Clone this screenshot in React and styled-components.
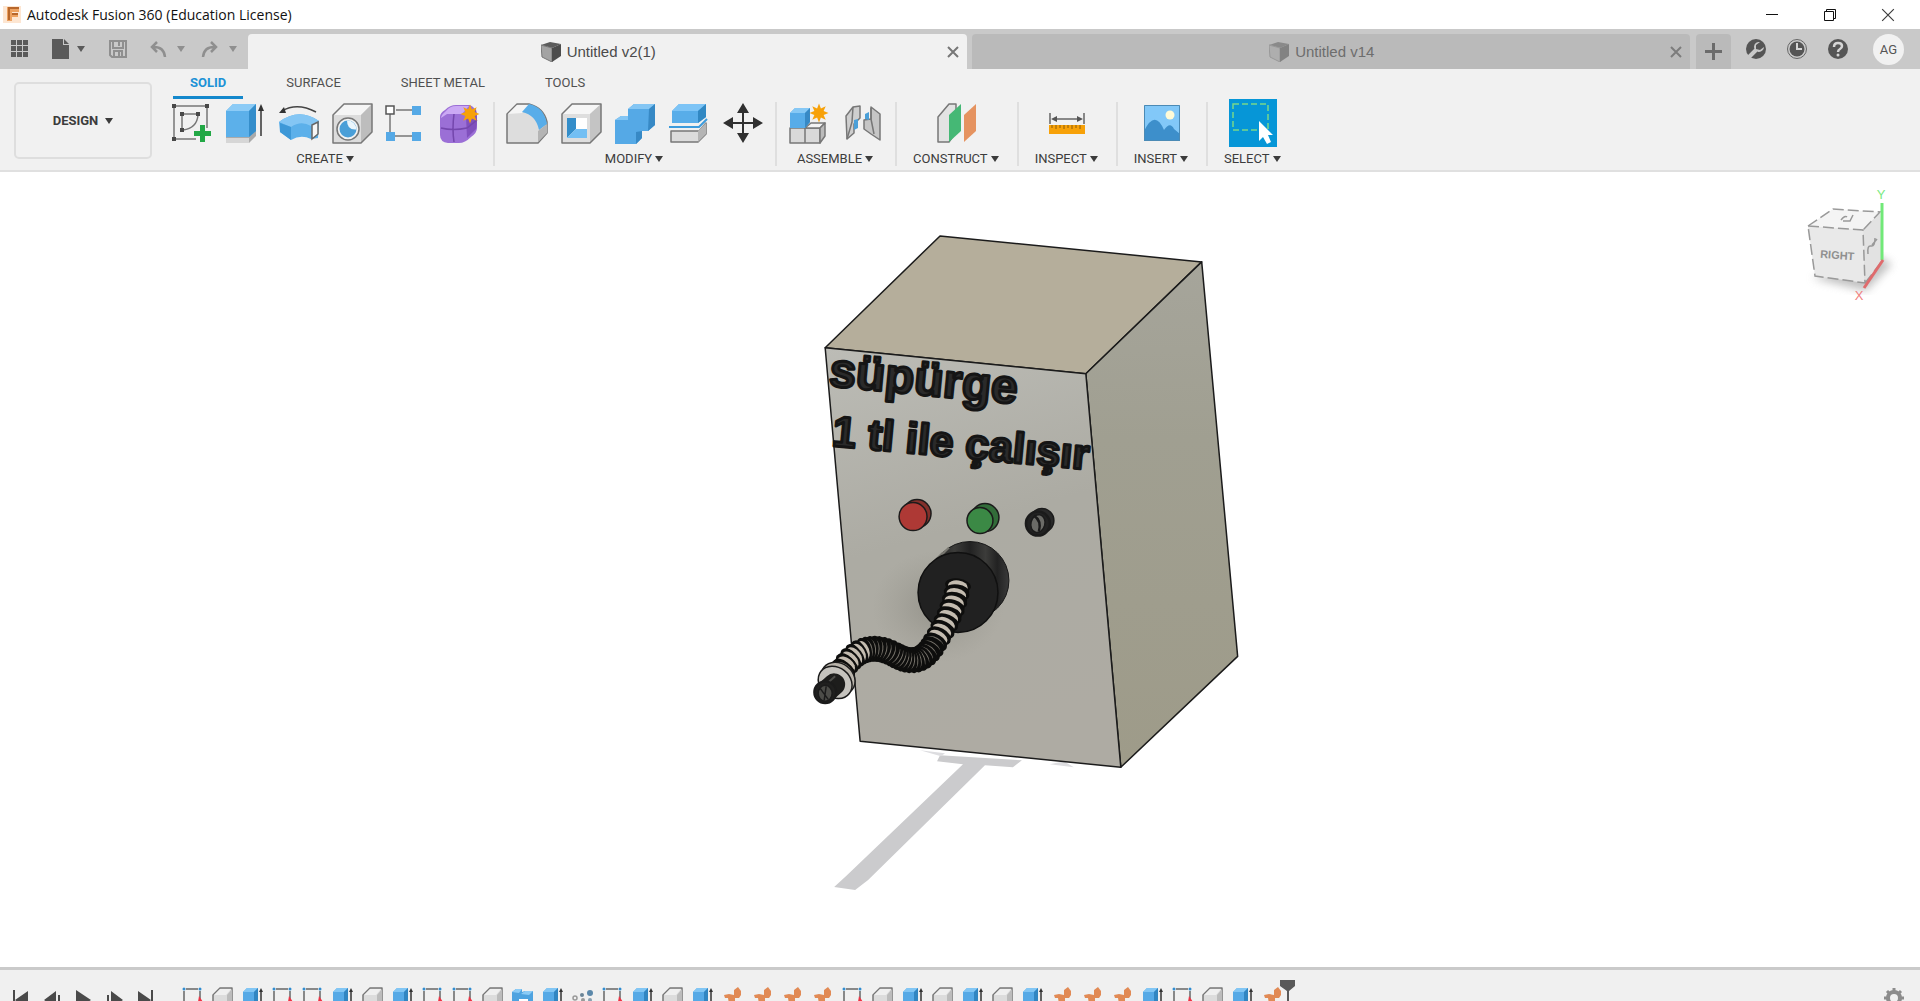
import React from "react";
import styled, { createGlobalStyle } from "styled-components";

const Global = createGlobalStyle`
  * { box-sizing: border-box; }
  html, body { margin: 0; background: #fff; }
  body { font-family: Roboto, "Liberation Sans", sans-serif; color: #3c3c3c; }
  button { font: inherit; color: inherit; background: none; border: 0; padding: 0; margin: 0; cursor: pointer; }
  svg { display: block; }
`;

const Shell = styled.div`
  display: flex;
  flex-direction: column;
  height: 100vh;
  overflow: hidden;
`;

/* ---------- window title ---------- */

const TitleBar = styled.header`
  display: flex;
  align-items: center;
  height: 29px;
  padding: 0 22px 0 3px;
  background: #fff;
`;

const Title = styled.h1`
  flex: 1;
  margin: 0 0 0 6px;
  font: 400 14px/20px "Open Sans", sans-serif;
  color: #111;
`;

const WindowButtons = styled.div`
  display: flex;
  gap: 38px;
`;

const WindowButton = styled.button`
  width: 20px;
  height: 20px;
  display: grid;
  place-items: center;
`;

/* ---------- document bar ---------- */

const DocumentBar = styled.div`
  display: flex;
  align-items: stretch;
  height: 40px;
  padding-top: 5px;
  background: #c9c9c9;
`;

const QuickAccess = styled.div`
  display: flex;
  align-items: center;
  width: 248px;
  padding: 0 8px 5px 10px;
  color: #555;
`;

const QuickButton = styled.button`
  display: flex;
  align-items: center;
  gap: ${(p) => (p.$muted ? 9 : 5)}px;
  margin-right: ${(p) => p.$after || 0}px;
  color: ${(p) => (p.$muted ? "#8f8f8f" : "#5a5a5a")};
`;

const Tabs = styled.div`
  display: flex;
  flex: 1;
  gap: 5px;
`;

const DocTab = styled.div`
  display: flex;
  align-items: center;
  flex: 1;
  padding-right: 8px;
  border-radius: 4px 4px 0 0;
  background: ${(p) => (p.$active ? "#f1f1f1" : "#bababa")};
  color: ${(p) => (p.$active ? "#4a4a4a" : "#6d6d6d")};
`;

const DocTitle = styled.button`
  display: flex;
  flex: 1;
  align-items: center;
  justify-content: center;
  gap: 5px;
  height: 35px;
  padding-left: 2px;
  font: 400 15px/20px "Liberation Sans", Arial, sans-serif;
`;

const CloseTab = styled.button`
  color: ${(p) => (p.$active ? "#777" : "#7c7c7c")};
`;

const AddTab = styled.button`
  display: grid;
  place-items: center;
  width: 35px;
  margin-left: 6px;
  border-radius: 4px 4px 0 0;
  background: #bababa;
  color: #6b6b6b;
`;

const Account = styled.div`
  display: flex;
  align-items: center;
  gap: 21px;
  padding: 0 16px 5px 15px;
  color: #555;
`;

const Avatar = styled.button`
  width: 31px;
  height: 31px;
  margin-left: 4px;
  border-radius: 50%;
  background: #f1f1f1;
  color: #555;
  font-size: 13px;
  line-height: 31px;
`;

/* ---------- ribbon ---------- */

const Ribbon = styled.div`
  display: flex;
  height: 103px;
  padding-left: 14px;
  background: #f1f1f1;
  border-bottom: 2px solid #e0e0e0;
`;

const Workspace = styled.button`
  display: flex;
  align-items: center;
  justify-content: center;
  gap: 7px;
  width: 138px;
  height: 77px;
  margin-top: 13px;
  border: 2px solid #dedede;
  border-radius: 5px;
  font-size: 13px;
  font-weight: 700;
`;

const RibbonBody = styled.div`
  margin-left: 5px;
`;

const RibbonTabs = styled.nav`
  display: flex;
  gap: 26px;
  padding-left: 16px;
`;

const RibbonTab = styled.button`
  height: 30px;
  padding: 0 17px;
  border-bottom: 3px solid ${(p) => (p.$active ? "#1488cc" : "transparent")};
  color: ${(p) => (p.$active ? "#1c92d6" : "#505050")};
  font-size: 13px;
  font-weight: ${(p) => (p.$active ? 700 : 400)};
`;

const Groups = styled.div`
  display: flex;
`;

const Group = styled.section`
  position: relative;
  padding: 0 8px 0 10px;
  & + &::before {
    content: "";
    position: absolute;
    left: 0;
    top: 3px;
    bottom: 4px;
    width: 2px;
    background: #dfdfdf;
  }
`;

const Tools = styled.div`
  display: flex;
  justify-content: center;
  gap: 6px;
`;

const Tool = styled.button`
  display: grid;
  place-items: center;
  width: 48px;
  height: 48px;
  background: ${(p) => (p.$active ? "#0696d7" : "none")};
`;

const GroupLabel = styled.button`
  display: flex;
  align-items: center;
  justify-content: center;
  gap: 3px;
  width: 100%;
  height: 23px;
  padding: 0 10px 0 8px;
  font-size: 13px;
`;

/* ---------- canvas ---------- */

const Viewport = styled.main`
  position: relative;
  flex: 1;
  min-height: 0;
  background: #fff;
`;

const Scene = styled.svg`
  width: 100%;
  height: 100%;
`;

const ViewCube = styled.svg`
  position: absolute;
  top: 8px;
  right: 10px;
`;

/* ---------- timeline ---------- */

const Timeline = styled.footer`
  display: flex;
  align-items: flex-start;
  height: 34px;
  padding: 16px 11px 0 6px;
  border-top: 3px solid #cacaca;
  background: #f0f0f0;
  overflow: hidden;
`;

const Playback = styled.div`
  display: flex;
  gap: 1px;
  width: 171px;
  color: #4a4a4a;
`;

const TimelineButton = styled.button`
  display: grid;
  justify-items: center;
  width: 30px;
  height: 26px;
`;

const Features = styled.div`
  display: flex;
  flex: 1;
`;

const Marker = styled.svg`
  margin: -6px 0 0 -8px;
  flex: none;
`;

/* ---------- small glyphs ---------- */

const Caret = () => (
  <svg width="8" height="6" viewBox="0 0 8 6" aria-hidden="true"><path d="M0 0h8L4 6z" fill="currentColor" /></svg>
);

const Cross = ({ size = 12, width = 2 }) => (
  <svg width={size} height={size} viewBox="0 0 12 12"><path d="M1 1l10 10M11 1L1 11" stroke="currentColor" strokeWidth={width} /></svg>
);

const Cube = ({ faded }) => (
  <svg width="21" height="20" viewBox="0 0 21 20" opacity={faded ? 0.5 : 1}>
    <path d="M0 3l9-3 11 2-9 4z" fill="#5c5c5c" />
    <path d="M0 3l11 3v14L1 15z" fill="#a3a3a3" stroke="#777" />
    <path d="M11 6l9-4v12l-9 6z" fill="#4c4c4c" />
  </svg>
);

const Logo = () => (
  <svg width="18" height="19" viewBox="0 0 18 19">
    <path d="M0 1h18v17H0z" fill="#fde6d2" />
    <path d="M4 2h12v5H9v1h6v4H9v4H4z" fill="#eda261" />
    <path d="M5 2h11v2H5zM5 2h2v13H5zM9 8h6v2H9z" fill="#b8672b" />
  </svg>
);

const edge = { stroke: "#777", strokeWidth: 1.500, strokeLinejoin: "round" };
const Star = ({ x, y }) => {
  const pts = [];
  for (let i = 0; i < 16; i++) {
    const r = i % 2 ? 5 : 9.500;
    const a = (i * Math.PI) / 8;
    pts.push(`${x + r * Math.sin(a)},${y - r * Math.cos(a)}`);
  }
  return <polygon points={pts.join(" ")} fill="#f7a108" />;
};

const ICONS = {
  sketch: (
    <>
      <path d="M5 5h33v22M5 5v33h22M13 13h16M13 13v16M29 14q-1 13-15 15" fill="none" stroke="#777" strokeWidth="1.500" />
      <path d="M3 3h4v4H3zM36 3h4v4h-4zM3 36h4v4H3zM11 11h4v4h-4zM27 11h4v4h-4zM11 27h4v4h-4z" fill="#484848" />
      <path d="M31 24h5v6h6v5h-6v6h-5v-6h-6v-5h6z" fill="#22a846" />
    </>
  ),
  extrude: (
    <>
      <path d="M3 36l7-7h23v6l-7 7H3z" fill="#aaa" /><path d="M3 37h23v5H3z" fill="#d6d6d6" />
      <path d="M3 10l7-7h23v27l-7 6H3z" fill="#5cb0ea" />
      <path d="M3 10l7-7h23l-7 7z" fill="#8ccbf6" /><path d="M26 10l7-7v27l-7 6z" fill="#358ecb" />
      <path d="M38 35V8" stroke="#333" strokeWidth="1.500" /><path d="M38 3l3 7h-6z" fill="#333" />
    </>
  ),
  revolve: (
    <>
      <path d="M5 10Q20 1 39 11" fill="none" stroke="#444" strokeWidth="1.500" /><path d="M2 12l5-6 2 6z" fill="#333" />
      <path d="M2 21Q22 6 42 20l-1 17-7 1q-10-5-20 1L3 31z" fill="#5cb0ea" />
      <path d="M2 21Q22 6 42 20l-8 5q-10-6-20 1z" fill="#84c6f4" /><path d="M3 22l11 4v13L3 31z" fill="#3d98d7" />
      <path d="M35 24l6-3v12l-6 5z" fill="#f6f6f6" stroke="#666" strokeWidth="1.500" />
    </>
  ),
  hole: (
    <>
      <path d="M2 14L13 3h28v28L30 42H2z" fill="#dcdcdc" /><path d="M2 14L13 3h28L30 14z" fill="#f5f5f5" />
      <path d="M30 14L41 3v28L30 42z" fill="#bdbdbd" /><path d="M2 14L13 3h28v28L30 42H2z" fill="none" {...edge} />
      <circle cx="17" cy="28" r="11" fill="#f3f3f3" {...edge} /><circle cx="17" cy="28" r="8.500" fill="#4a9fd8" />
      <path d="M16 19.500q0 10 9.500 9a9 9 0 0 0-9.500-9z" fill="#eaf5fc" />
    </>
  ),
  pattern: (
    <>
      <path d="M11 9h17M5 13v19M9 35h20" stroke="#777" strokeWidth="1.500" />
      <path d="M1 5h8v8H1z" fill="#fff" stroke="#555" strokeWidth="1.500" /><path d="M27 5h9v9h-9zM1 31h9v9H1zM27 31h9v9h-9z" fill="#55a9e6" />
    </>
  ),
  form: (
    <>
      <path d="M1 16Q1 12 6 9q5-5 11-5h14q7 3 7 12v11q0 5-6 9-6 6-12 6H9q-8-1-8-8z" fill="#9b6fd6" />
      <path d="M2 17q0-3 5-7 4-5 10-5h13l-7 8H8z" fill="#cba9f4" /><path d="M27 15l10-7q2 12 0 20l-9 9z" fill="#8050bd" />
      <path d="M2 27q12 3 26 0l10-8M15 13q-2 15 0 28" fill="none" stroke="#7447ad" strokeWidth="1.500" />
      <Star x={31} y={13} />
    </>
  ),
  fillet: (
    <>
      <path d="M2 13L12 3h12q15 4 18 18v11L33 42H2z" fill="#ddd" {...edge} /><path d="M3 13L12 4h12l-7 8z" fill="#f5f5f5" />
      <path d="M17 11l7-8q15 3 18 20l-8 6Q31 14 17 11z" fill="#58ade9" /><path d="M33 30l9-7v9l-9 9z" fill="#b4b4b4" />
    </>
  ),
  shell: (
    <>
      <path d="M3 13L13 3h29v28L31 42H3z" fill="#dedede" /><path d="M3 13L13 3h29L31 13z" fill="#f6f6f6" /><path d="M31 13L42 3v28L31 42z" fill="#c4c4c4" />
      <path d="M3 13L13 3h29v28L31 42H3z" fill="none" {...edge} />
      <path d="M8 17h20v20H8z" fill="#fff" /><path d="M8 17l9 0v11L8 37z" fill="#338dc9" /><path d="M17 28h11v9H8z" fill="#73bff3" />
    </>
  ),
  combine: (
    <>
      <path d="M2 19l6-4h7V8l6-5h21v21l-7 6h-6v7l-6 6H2z" fill="#55a9e6" />
      <path d="M15 8l6-5h21l-6 5zM2 19l6-4h7v4z" fill="#84c6f4" /><path d="M36 8l6-5v21l-7 6zM29 30v7l-6 6V31z" fill="#3789c5" />
    </>
  ),
  split: (
    <>
      <path d="M5 10l7-7h27v13l-8 6H5z" fill="#58ade9" /><path d="M5 10l7-7h27l-8 7z" fill="#7dc4f6" /><path d="M31 10l8-7v13l-8 6z" fill="#3188c3" />
      <path d="M2 26h30l8-8" fill="none" stroke="#3c9bdc" strokeWidth="2" />
      <path d="M4 30h28l7-8v11l-8 8H4z" fill="#dcdcdc" {...edge} /><path d="M31 30l8-8v11l-8 8z" fill="#b5b5b5" />
    </>
  ),
  move: <path d="M22 2l6 10h-5v9h9v-5l10 6-10 6v-5h-9v9h5l-6 10-6-10h5v-9h-9v5L2 22l10-6v5h9v-9h-5z" fill="#303030" />,
  component: (
    <>
      <path d="M3 27h15v15H3z M18 27h15v15H18z" fill="#d9d9d9" {...edge} /><path d="M18 27l6-5h14l-5 5z" fill="#f4f4f4" {...edge} /><path d="M33 27l5-5v13l-5 7z" fill="#bbb" {...edge} />
      <path d="M3 12l5-5h15v14l-5 6H3z" fill="#57ace9" /><path d="M3 12l5-5h15l-5 5z" fill="#86c8f5" /><path d="M18 12l5-5v14l-5 6z" fill="#3789c5" />
      <Star x={32} y={12} />
    </>
  ),
  joint: (
    <>
      <path d="M5 15L12 6l7-1v12l-6 6v9l-7 6z" fill="#cfcfcf" {...edge} /><path d="M12 6l-1 15-5 17" fill="none" {...edge} />
      <path d="M13 19l4-1v9l-4 2z" fill="#4a9fd8" />
      <path d="M30 6l9 7v26l-9-6-7-5V19l7-1z" fill="#c6c6c6" {...edge} /><path d="M30 7v12M30 18l3 15" fill="none" {...edge} />
      <path d="M24 13l4-2v8l-4-1z" fill="#4a9fd8" />
    </>
  ),
  plane: (
    <>
      <path d="M3 16L14 3h7v28L14 41H3z" fill="#e3e3e3" {...edge} /><path d="M14 14L26 3v27L14 41z" fill="#45b875" /><path d="M29 14L41 3v27L29 41z" fill="#e59360" />
    </>
  ),
  measure: (
    <>
      <path d="M5 12v11M39 12v11M8 18h28" stroke="#666" strokeWidth="1.500" /><path d="M6 18l6-3v6zM38 18l-6-3v6z" fill="#555" />
      <path d="M4 24h36v9H4z" fill="#f7a108" /><path d="M7 24v3m4-3v4m4-4v3m4-3v4m4-4v3m4-3v4m4-4v3m4-3v4" stroke="#8c5d08" />
    </>
  ),
  image: (
    <>
      <path d="M4 4h36v36H4z" fill="#82c8f8" /><circle cx="30" cy="14" r="4.500" fill="#fffbd7" />
      <path d="M4 30Q15 8 24 29q6-9 10-1l6 5v7H4z" fill="#3d8fcb" /><path d="M4.500 4.500h35v35h-35z" fill="none" stroke="#4b8ab5" />
    </>
  ),
  select: (
    <>
      <path d="M2 3h35v26H2z" fill="none" stroke="#78d88a" strokeWidth="1.500" strokeDasharray="6 3" />
      <path d="M28 20v20l4-4 4 7 4-2-3-7h5z" fill="#fff" />
    </>
  ),
};

const ToolIcon = ({ name }) => <svg width="44" height="44" viewBox="0 0 44 44">{ICONS[name]}</svg>;

const GROUPS = [
  { label: "CREATE", tools: ["sketch", "extrude", "revolve", "hole", "pattern", "form"] },
  { label: "MODIFY", tools: ["fillet", "shell", "combine", "split", "move"] },
  { label: "ASSEMBLE", tools: ["component", "joint"] },
  { label: "CONSTRUCT", tools: ["plane"] },
  { label: "INSPECT", tools: ["measure"] },
  { label: "INSERT", tools: ["image"] },
  { label: "SELECT", tools: ["select"] },
];

const FEATURE_ART = {
  s: (
    <>
      <path d="M7 3h12M5 5v19M21 5v8" stroke="#666" strokeWidth="1.500" /><circle cx="5" cy="3" r="1.500" fill="#2f8cd0" /><circle cx="21" cy="3" r="1.500" fill="#2f8cd0" />
      <path d="M20 10l4 6h-5z" fill="#ee3344" />
    </>
  ),
  f: (
    <>
      <path d="M4 24V9l7-7h12v16l-5 6z" fill="#dcdcdc" stroke="#777" strokeWidth="1.500" strokeLinejoin="round" />
      <path d="M18 9l5-6v15l-5 5z" fill="#bcbcbc" /><path d="M5 9l6-6h11l-5 6z" fill="#efefef" />
    </>
  ),
  e: (
    <>
      <path d="M4 6l4-4h11v18l-4 4H4z" fill="#55a9e6" /><path d="M4 6l4-4h11l-4 4z" fill="#82c6f4" /><path d="M15 6l4-4v18l-4 4z" fill="#3186c2" />
      <path d="M22 22V5" stroke="#333" strokeWidth="1.500" /><path d="M22 2l2 4h-4z" fill="#333" />
    </>
  ),
  c: (
    <>
      <path d="M3 6l4-3h6v3l3-1h8v17H3z" fill="#4ea3e0" /><path d="M3 6l4-3h6l-3 4zM12 8l4-3h8l-4 4z" fill="#8bcbf6" /><path d="M10 14h9" stroke="#fff" strokeWidth="2" />
    </>
  ),
  p: (
    <>
      <circle cx="21" cy="7" r="3" fill="#5b88aa" /><circle cx="13" cy="9" r="2" fill="#6a8496" /><circle cx="6" cy="12" r="2" fill="none" stroke="#999" strokeWidth="1.500" /><circle cx="14" cy="14" r="2" fill="#999" /><circle cx="21" cy="14" r="2" fill="#8aa0b0" />
    </>
  ),
  j: <path d="M5 9l5-1 5 1V4l4-3 3 4v4l-2 3h-4v7l-3 5-3-6-1-6H6z" fill="#e18a55" />,
};

const FEATURES = "sfessefessfcepsefejjjjsfefefejjjesfej".split("");
const FEATURE_NAMES = { s: "Sketch", f: "Fillet", e: "Extrude", c: "Combine", p: "Pattern", j: "Joint" };

const PLAYBACK = [
  ["Go to start", "M7 4h2v20H7zM22 5v20L9 14z"],
  ["Step back", "M19 5v18L7 14zM21 9h2v16h-2z"],
  ["Play", "M8 4l15 10L8 24z"],
  ["Step forward", "M12 5v18l12-9zM8 9h2v16H8z"],
  ["Go to end", "M8 5v20l13-11zM21 4h2v20h-2z"],
];

/* ---------- model ---------- */

const line = { stroke: "#1b1b1b", strokeWidth: 1.500, strokeLinejoin: "round" };

const HOSE = [
  { curve: [[958, 585], [955, 606], [945, 626], [935, 642]], rings: 8, dark: false },
  { curve: [[935, 642], [922, 665], [908, 662], [894, 654]], rings: 13, dark: true },
  { curve: [[894, 654], [883, 648], [873, 647], [864, 650]], rings: 8, dark: true },
  { curve: [[864, 650], [855, 653], [846, 662], [840, 674]], rings: 6, dark: false },
];

const bezier = (c, t, axis) => {
  const u = 1 - t;
  return u * u * u * c[0][axis] + 3 * u * u * t * c[1][axis] + 3 * u * t * t * c[2][axis] + t * t * t * c[3][axis];
};

const HoseRings = () => HOSE.flatMap(({ curve, rings, dark }, s) =>
  Array.from({ length: rings }, (_, i) => {
    const t = i / rings;
    const x = bezier(curve, t, 0);
    const y = bezier(curve, t, 1);
    const dx = bezier(curve, t + 0.01, 0) - x;
    const dy = bezier(curve, t + 0.01, 1) - y;
    const angle = (Math.atan2(dy, dx) * 180) / Math.PI;
    return (
      <g key={`${s}-${i}`} transform={`translate(${x} ${y}) rotate(${angle})`}>
        <ellipse rx="7" ry="13" fill="#0e0e0d" />
        <ellipse cx="1" rx="6" ry="10" fill={dark ? "#77736b" : "#c4bcb0"} />
        <ellipse cx={dark ? 2 : 5} rx="6" ry="12" fill="#0e0e0d" />
      </g>
    );
  })
);

const Model = () => (
  <Scene viewBox="0 171 1920 796" role="img" aria-label="Vacuum cabinet model">
    <defs>
      <linearGradient id="front" x1="0" y1="0" x2="0.200" y2="1"><stop offset="0" stopColor="#bcbcb6" /><stop offset="0.500" stopColor="#acaba3" /><stop offset="1" stopColor="#aeaba3" /></linearGradient>
      <linearGradient id="side" x1="0" y1="0" x2="0" y2="1"><stop offset="0" stopColor="#a6a59b" /><stop offset="0.350" stopColor="#a09f91" /><stop offset="1" stopColor="#9e9b89" /></linearGradient>
      <radialGradient id="shade"><stop offset="0" stopColor="#76746b" stopOpacity="0.450" /><stop offset="1" stopColor="#8b8980" stopOpacity="0" /></radialGradient>
      <linearGradient id="rim"><stop offset="0" stopColor="#1b1b1b" /><stop offset="0.300" stopColor="#3c3c3a" /><stop offset="0.500" stopColor="#222" /><stop offset="0.700" stopColor="#3c3c3a" /><stop offset="0.850" stopColor="#222" /><stop offset="1" stopColor="#3a3a3a" /></linearGradient>
    </defs>
    <path d="M940 755L937 761L963 764L846 876L834 887L855 890L868 880L985 765L1013 767L1022 760z" fill="#cbcbcd" />
    <path d="M920 750l25 3-4 3zM1050 764l24 3-10-6z" fill="#dddde0" />
    <path d="M940 235L1202 261L1086 373L825 347z" fill="#b5ae9b" {...line} />
    <path d="M1202 261L1238 656L1121 767L1086 373z" fill="url(#side)" {...line} />
    <path d="M825 347L1086 373L1121 767L860 741z" fill="url(#front)" {...line} />
    <ellipse cx="938" cy="606" rx="66" ry="56" fill="url(#shade)" />
    <g fontFamily='"Liberation Sans", Arial, sans-serif' fontWeight="700" fill="#2a2a2a" stroke="#151515" strokeWidth="3" strokeLinejoin="round">
      <text transform="translate(828 385) rotate(5.500)" fontSize="48">süpürge</text>
      <text transform="translate(831 445) rotate(5.300)" fontSize="43">1 tl ile çalışır</text>
    </g>
    <g {...line}>
      <circle cx="917" cy="513" r="14" fill="#82302b" /><circle cx="913" cy="516" r="14" fill="#ae3935" />
      <circle cx="985" cy="517" r="14" fill="#326c39" /><circle cx="980" cy="520" r="13" fill="#3b8945" />
      <circle cx="1042" cy="520" r="12" fill="#292929" /><circle cx="1038" cy="523" r="12" fill="#222" strokeWidth="2.500" />
      <ellipse cx="1038" cy="523" rx="7" ry="9" fill="#6b6b67" transform="rotate(15 1038 523)" /><path d="M1034 515q8 5 5 16" fill="none" strokeWidth="2.500" />
    </g>
    <circle cx="970" cy="580" r="39" fill="url(#rim)" stroke="#171717" />
    <path d="M943 552l-9 9M949 547l-8 8" stroke="#77766f" strokeWidth="2" />
    <circle cx="958" cy="592" r="40" fill="#212121" stroke="#101010" strokeWidth="1.500" />
    <HoseRings />
    <g {...line}>
      <ellipse cx="838" cy="678" rx="15" ry="18" fill="#b9b4ab" transform="rotate(-52 838 678)" />
      <ellipse cx="835" cy="682" rx="15" ry="18" fill="#c5c3be" transform="rotate(-52 835 682)" />
      <path d="M834 684L825 692" stroke="#1d1d1c" strokeWidth="22" strokeLinecap="round" />
      <path d="M835 676l-9 8" stroke="#4c4c49" strokeWidth="2" />
      <circle cx="825" cy="692" r="11" fill="#20201f" strokeWidth="2" /><ellipse cx="825" cy="693" rx="7" ry="8" fill="#4c4c48" /><path d="M820 688l8 11M826 686l-2 14" fill="none" />
    </g>
  </Scene>
);

const Orientation = () => (
  <ViewCube width="120" height="130" viewBox="1790 180 120 130" role="img" aria-label="View cube">
    <defs><filter id="soft"><feGaussianBlur stdDeviation="4" /></filter></defs>
    <path d="M1812 278L1866 291L1892 264L1878 256L1840 270z" fill="#999" opacity="0.600" filter="url(#soft)" />
    <path d="M1808 226L1833 209L1880 212L1863 230z" fill="#f4f4f4" />
    <path d="M1808 226L1863 230L1865 283L1815 276z" fill="#e9e9e9" />
    <path d="M1863 230L1880 212L1883 260L1865 283z" fill="#e2e2e2" />
    <path d="M1808 226L1863 230L1865 283L1815 276zM1808 226L1833 209L1880 212L1863 230M1865 283L1883 260" fill="none" stroke="#999" strokeWidth="1.500" strokeDasharray="11 4" />
    <path d="M1841 220q4-5 6-3M1843 221h7l3-6M1868 254q-1-9 3-8t4-8M1872 245l5-6" fill="none" stroke="#999" strokeWidth="1.500" />
    <path d="M1882 203v57" stroke="#71e978" strokeWidth="3" />
    <path d="M1883 260L1864 288" stroke="#df6b6d" strokeWidth="3" />
    <g fontFamily='"Liberation Sans", Arial, sans-serif' textAnchor="middle">
      <text transform="translate(1837 259) rotate(4)" fontSize="11" fontWeight="700" fill="#909090">RIGHT</text>
      <text x="1881" y="199" fontSize="13" fill="#7bea83">Y</text>
      <text x="1859" y="300" fontSize="13" fill="#f08080">X</text>
    </g>
  </ViewCube>
);

export default function App() {
  return (
    <Shell>
      <Global />
      <TitleBar>
        <Logo />
        <Title>Autodesk Fusion 360 (Education License)</Title>
        <WindowButtons>
          <WindowButton aria-label="Minimize"><svg width="12" height="12"><path d="M0 5.500h12" stroke="#111" /></svg></WindowButton>
          <WindowButton aria-label="Restore"><svg width="12" height="12"><path d="M.5 2.500h9v9h-9zM2.500 2.500v-2h9v9h-2" fill="none" stroke="#111" /></svg></WindowButton>
          <WindowButton aria-label="Close"><Cross size={14} width={1} /></WindowButton>
        </WindowButtons>
      </TitleBar>

      <DocumentBar>
        <QuickAccess>
          <QuickButton $after={22} aria-label="Data panel">
            <svg width="20" height="20" viewBox="0 0 20 20"><path d="M1 1h5v5H1zM7 1h5v5H7zM13 1h5v5h-5zM1 7h5v5H1zM7 7h5v5H7zM13 7h5v5h-5zM1 13h5v5H1zM7 13h5v5H7zM13 13h5v5h-5z" fill="currentColor" /></svg>
          </QuickButton>
          <QuickButton $after={22} aria-label="File">
            <svg width="20" height="20" viewBox="0 0 20 20"><path d="M0 0h11v6h6v14H0zM12 0l5 5h-5z" fill="currentColor" /></svg><Caret />
          </QuickButton>
          <QuickButton $muted $after={21} aria-label="Save">
            <svg width="20" height="20" viewBox="0 0 20 20"><path d="M3 2h16v16H5l-2-2zM6 3v6h10V3M7 18v-6h8v6M12 13v4M12 3v4" fill="none" stroke="currentColor" strokeWidth="2" /></svg>
          </QuickButton>
          <QuickButton $muted $after={15} aria-label="Undo">
            <svg width="20" height="20" viewBox="0 0 20 20"><path d="M9 3L4 8l5 5M4 8q12-1 13 10" fill="none" stroke="currentColor" strokeWidth="2.500" /></svg><Caret />
          </QuickButton>
          <QuickButton $muted aria-label="Redo">
            <svg width="20" height="20" viewBox="0 0 20 20"><path d="M11 3l5 5-5 5M16 8Q4 7 3 18" fill="none" stroke="currentColor" strokeWidth="2.500" /></svg><Caret />
          </QuickButton>
        </QuickAccess>
        <Tabs>
          <DocTab $active>
            <DocTitle><Cube />Untitled v2(1)</DocTitle>
            <CloseTab $active aria-label="Close Untitled v2(1)"><Cross /></CloseTab>
          </DocTab>
          <DocTab>
            <DocTitle><Cube faded />Untitled v14</DocTitle>
            <CloseTab aria-label="Close Untitled v14"><Cross /></CloseTab>
          </DocTab>
        </Tabs>
        <AddTab aria-label="New tab"><svg width="17" height="17"><path d="M8.500 0v17M0 8.500h17" stroke="currentColor" strokeWidth="3" /></svg></AddTab>
        <Account>
          <button aria-label="Extensions">
            <svg width="20" height="20" viewBox="0 0 20 20"><circle cx="10" cy="10" r="10" fill="#555" /><path d="M3 18l7-7" stroke="#c9c9c9" strokeWidth="4" /><path d="M14 3a5 5 0 1 0 4 5l-4 3-4-1v-4z" fill="#c9c9c9" /></svg>
          </button>
          <button aria-label="Job status">
            <svg width="20" height="20" viewBox="0 0 20 20"><circle cx="10" cy="10" r="9.500" fill="none" stroke="#666" /><circle cx="10" cy="10" r="7.500" fill="#555" /><path d="M10 4v6h5" fill="none" stroke="#d5d5d5" strokeWidth="2" /></svg>
          </button>
          <button aria-label="Help">
            <svg width="20" height="20" viewBox="0 0 20 20"><circle cx="10" cy="10" r="10" fill="#555" /><path d="M6 8q0-4 4-4t4 3q0 2-2 3t-2 3" fill="none" stroke="#d5d5d5" strokeWidth="2.500" /><circle cx="10" cy="16" r="1.500" fill="#d5d5d5" /></svg>
          </button>
          <Avatar>AG</Avatar>
        </Account>
      </DocumentBar>

      <Ribbon>
        <Workspace>DESIGN<Caret /></Workspace>
        <RibbonBody>
          <RibbonTabs>
            <RibbonTab $active>SOLID</RibbonTab>
            <RibbonTab>SURFACE</RibbonTab>
            <RibbonTab>SHEET METAL</RibbonTab>
            <RibbonTab>TOOLS</RibbonTab>
          </RibbonTabs>
          <Groups>
            {GROUPS.map((g) => (
              <Group key={g.label}>
                <Tools>
                  {g.tools.map((t) => (
                    <Tool key={t} $active={t === "select"} aria-label={t}><ToolIcon name={t} /></Tool>
                  ))}
                </Tools>
                <GroupLabel>{g.label}<Caret /></GroupLabel>
              </Group>
            ))}
          </Groups>
        </RibbonBody>
      </Ribbon>

      <Viewport>
        <Model />
        <Orientation />
      </Viewport>

      <Timeline>
        <Playback>
          {PLAYBACK.map(([name, d]) => (
            <TimelineButton key={name} aria-label={name}><svg width="30" height="26"><path d={d} fill="currentColor" /></svg></TimelineButton>
          ))}
        </Playback>
        <Features>
          {FEATURES.map((k, i) => (
            <TimelineButton key={i} aria-label={FEATURE_NAMES[k]}><svg width="26" height="26" viewBox="0 0 26 26">{FEATURE_ART[k]}</svg></TimelineButton>
          ))}
          <Marker width="16" height="30"><path d="M1 0h15v6l-6 5v19H8V11L1 6z" fill="#595959" /></Marker>
        </Features>
        <TimelineButton aria-label="Timeline settings">
          <svg width="22" height="22" viewBox="0 0 22 22"><circle cx="11" cy="12" r="6" fill="none" stroke="#8c8c8c" strokeWidth="4" /><path d="M11 2v4M11 18v4M1 12h4M17 12h4M4 5l3 3M15 16l3 3M18 5l-3 3M7 16l-3 3" stroke="#8c8c8c" strokeWidth="3" /></svg>
        </TimelineButton>
      </Timeline>
    </Shell>
  );
}
